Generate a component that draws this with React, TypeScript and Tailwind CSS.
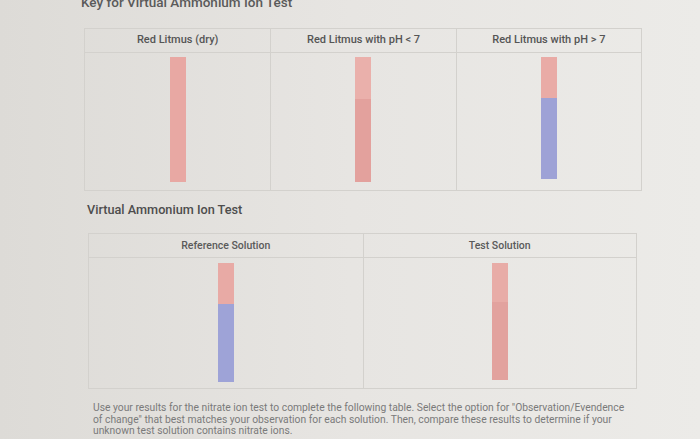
const keyCols = [
  { title: 'Red Litmus (dry)', top: 'bg-[#e8a8a3]', topH: 'h-[125px]', bottom: '', bottomH: '' },
  { title: 'Red Litmus with pH < 7', top: 'bg-[#eab0ab]', topH: 'h-[42px]', bottom: 'bg-[#e3a19d]', bottomH: 'h-[83px]' },
  { title: 'Red Litmus with pH > 7', top: 'bg-[#e9aba6]', topH: 'h-[41px]', bottom: 'bg-[#9ea2d6]', bottomH: 'h-[81px]' },
]

const testCols = [
  { title: 'Reference Solution', top: 'bg-[#e8aaa5]', topH: 'h-[41px]', bottom: 'bg-[#9ea3d7]', bottomH: 'h-[78px]' },
  { title: 'Test Solution', top: 'bg-[#e8aca7]', topH: 'h-[39px]', bottom: 'bg-[#e2a29e]', bottomH: 'h-[78px]' },
]

type Col = { title: string; top: string; topH: string; bottom: string; bottomH: string }

const Strip = ({ col }: { col: Col }) => (
  <div className="flex flex-col w-[16px]">
    <div className={`${col.top} ${col.topH}`} />
    {col.bottom && <div className={`${col.bottom} ${col.bottomH}`} />}
  </div>
)

const App = () => {
  return (
    <div
      className="w-[700px] h-[439px] overflow-hidden bg-gradient-to-r from-[#dddbd7] via-[#e7e5e2] to-[#ecebe8] text-[#555]"
      style={{ fontFamily: 'Roboto, "Noto Sans", sans-serif' }}
    >
      <h2 className="ml-[81px] -mt-[6px] text-[13.5px] leading-[16px] font-medium text-[#5a5a5a]">
        Key for Virtual Ammonium Ion Test
      </h2>

      <div className="ml-[84px] mt-[18px] w-[558px] border border-[#d3d1cd] grid grid-cols-3">
        {keyCols.map((col, i) => (
          <div key={col.title} className={`flex flex-col ${i > 0 ? 'border-l border-[#d3d1cd]' : ''}`}>
            <div className="h-[24px] flex items-center justify-center border-b border-[#d3d1cd] text-[11px] font-medium text-[#555]">
              {col.title}
            </div>
            <div className="h-[137px] flex justify-center pt-[4px]">
              <Strip col={col} />
            </div>
          </div>
        ))}
      </div>

      <h3 className="ml-[87px] mt-[11px] text-[12.7px] leading-[16px] font-medium text-[#4d4d4d]">
        Virtual Ammonium Ion Test
      </h3>

      <div className="ml-[88px] mt-[15px] w-[549px] border border-[#d3d1cd] grid grid-cols-2">
        {testCols.map((col, i) => (
          <div key={col.title} className={`flex flex-col ${i > 0 ? 'border-l border-[#d3d1cd]' : ''}`}>
            <div className="h-[24px] flex items-center justify-center border-b border-[#d3d1cd] text-[10.5px] font-medium text-[#5a5a5a]">
              {col.title}
            </div>
            <div className="h-[130px] flex justify-center pt-[5px]">
              <Strip col={col} />
            </div>
          </div>
        ))}
      </div>

      <p className="ml-[93px] mt-[13px] w-[580px] whitespace-nowrap text-[10.3px] leading-[11.5px] text-[#7a7a7a]">
        Use your results for the nitrate ion test to complete the following table. Select the option for "Observation/Evendence
        <br />
        of change" that best matches your observation for each solution. Then, compare these results to determine if your
        <br />
        unknown test solution contains nitrate ions.
      </p>
    </div>
  )
}

export default App
